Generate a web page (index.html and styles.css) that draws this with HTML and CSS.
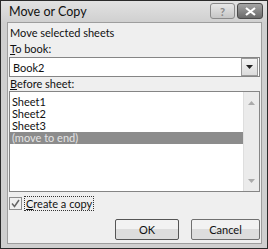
FILE: index.html
```html
<!DOCTYPE html>
<html lang="en">
<head>
    <meta charset="UTF-8">
    <title>Move or Copy</title>
    <link rel="stylesheet" href="styles.css">
</head>
<body>
    <div class="window">
        <div class="titlebar">
            <span class="title">Move or Copy</span>
            <div class="caption-buttons">
                <span class="cap-btn help">?</span>
                <span class="cap-btn close">
                    <svg width="13" height="9" viewBox="0 0 13 9"><path d="M2 1 L11 8 M11 1 L2 8" stroke="#fff" stroke-width="2.2"/></svg>
                </span>
            </div>
        </div>
        <div class="content">
            <div class="label">Move selected sheets</div>
            <div class="label"><u>T</u>o book:</div>
            <div class="combo">
                <span class="combo-text">Book2</span>
                <span class="combo-btn">
                    <svg width="7" height="4" viewBox="0 0 7 4"><path d="M0 0 H7 L3.5 4 Z" fill="#222"/></svg>
                </span>
            </div>
            <div class="label short"><u>B</u>efore sheet:</div>
            <div class="listbox">
                <div class="items">
                    <div class="item">Sheet1</div>
                    <div class="item">Sheet2</div>
                    <div class="item">Sheet3</div>
                    <div class="item selected">(move to end)</div>
                </div>
                <div class="scrollbar">
                    <svg width="7" height="4" viewBox="0 0 7 4"><path d="M0 4 H7 L3.5 0 Z" fill="#aaa"/></svg>
                    <svg width="7" height="4" viewBox="0 0 7 4"><path d="M0 0 H7 L3.5 4 Z" fill="#aaa"/></svg>
                </div>
            </div>
            <div class="check-row">
                <span class="checkbox">
                    <svg width="9" height="9" viewBox="0 0 9 9"><path d="M1 4.5 L3.5 7.5 L8 1" stroke="#666" stroke-width="1.5" fill="none"/></svg>
                </span>
                <span class="check-label"><u>C</u>reate a copy</span>
            </div>
            <div class="buttons">
                <button class="btn ok">OK</button>
                <button class="btn">Cancel</button>
            </div>
        </div>
    </div>
</body>
</html>
```

FILE: styles.css
```css
body {
    margin: 0;
    font-family: Lato, "Open Sans", Arial, sans-serif;
    font-size: 11px;
    color: #111;
    background: #fff;
}
.window {
    width: 266px;
    height: 247px;
    border: 1px solid #2a2a2a;
    background: #cfcfcf;
    display: flex;
    flex-direction: column;
}
.titlebar {
    height: 21px;
    display: flex;
    align-items: center;
    justify-content: space-between;
    padding: 0 4px 0 8px;
    background: linear-gradient(#e2e2e2, #d0d0d0);
}
.title {
    font-size: 12.5px;
    color: #111;
}
.caption-buttons {
    display: flex;
    gap: 2px;
    align-self: flex-start;
    margin-top: 2px;
}
.cap-btn {
    height: 14px;
    border: 1px solid #8a8a8a;
    border-radius: 3px;
    display: flex;
    align-items: center;
    justify-content: center;
}
.help {
    width: 23px;
    background: linear-gradient(#e8e8e8, #c6c6c6);
    color: #888;
    font-size: 11px;
    font-weight: bold;
}
.close {
    width: 24px;
    background: linear-gradient(#a4a4a4, #6a6a6a);
    border-color: #4a4a4a;
}
.content {
    flex: 1;
    margin: 0 5px 4px 6px;
    background: #efefef;
    border: 1px solid #9e9e9e;
    padding: 2px 1px 0 1px;
    display: flex;
    flex-direction: column;
}
.label {
    height: 16px;
    line-height: 16px;
    padding-left: 1px;
}
.short {
    height: 14px;
    line-height: 14px;
}
.combo {
    height: 18px;
    border: 1px solid #858585;
    background: #fff;
    display: flex;
    align-items: center;
}
.combo-text {
    flex: 1;
    padding-left: 3px;
}
.combo-btn {
    width: 15px;
    height: 16px;
    margin-right: 1px;
    border: 1px solid #999;
    background: linear-gradient(#f4f4f4, #dcdcdc);
    display: flex;
    align-items: center;
    justify-content: center;
}
.listbox {
    height: 99px;
    border: 1px solid #858585;
    background: #fff;
    display: flex;
}
.items {
    flex: 1;
    padding-top: 4px;
}
.item {
    height: 12px;
    line-height: 12px;
    padding-left: 2px;
}
.selected {
    background: #8c8c8c;
    color: #e4e4e4;
}
.scrollbar {
    width: 15px;
    background: #ebebeb;
    border-left: 1px solid #dedede;
    display: flex;
    flex-direction: column;
    justify-content: space-between;
    align-items: center;
    padding: 9px 0 8px;
}
.check-row {
    margin-top: 5px;
    height: 13px;
    display: flex;
    align-items: center;
    gap: 2px;
}
.checkbox {
    width: 11px;
    height: 11px;
    border: 1px solid #8e8e8e;
    background: #f0f0f0;
    display: flex;
    align-items: center;
    justify-content: center;
}
.check-label {
    border: 1px dotted #333;
    padding: 0 1px;
    line-height: 13px;
}
.buttons {
    margin-top: 9px;
    display: flex;
    justify-content: flex-end;
    gap: 12px;
}
.btn {
    width: 69px;
    height: 21px;
    border: 1px solid #707070;
    border-radius: 2px;
    background: linear-gradient(#f2f2f2 50%, #dddddd 50%);
    font-family: Lato, "Open Sans", Arial, sans-serif;
    font-size: 11px;
    color: #111;
    padding: 0;
}
.ok {
    width: 64px;
    border-color: #555;
}
```
